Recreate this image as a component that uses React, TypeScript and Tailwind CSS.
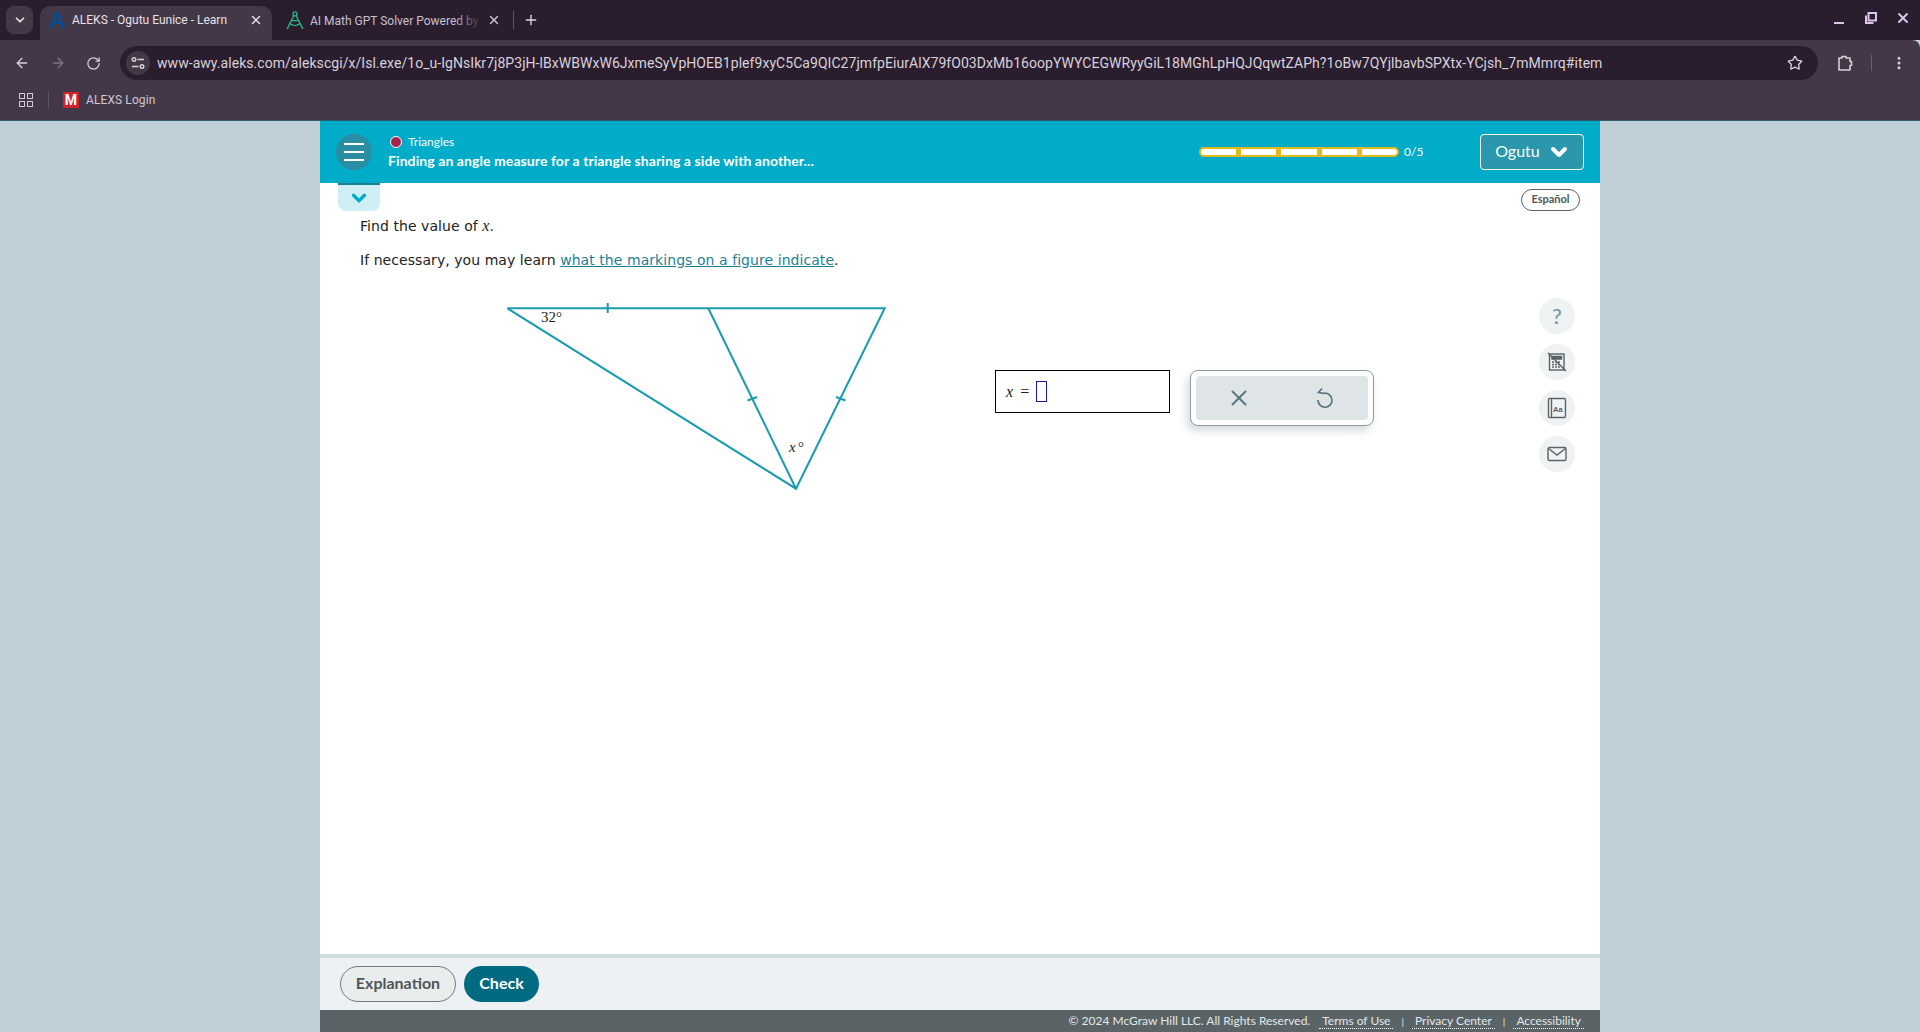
import { ArrowLeft, ArrowRight, RotateCw, Star, EllipsisVertical, X, Plus, ChevronDown } from "lucide-react";

const url =
  "www-awy.aleks.com/alekscgi/x/Isl.exe/1o_u-IgNsIkr7j8P3jH-lBxWBWxW6JxmeSyVpHOEB1plef9xyC5Ca9QIC27jmfpEiurAlX79fO03DxMb16oopYWYCEGWRyyGiL18MGhLpHQJQqwtZAPh?1oBw7QYjlbavbSPXtx-YCjsh_7mMmrq#item";

function AleksLogo() {
  return (
    <svg width="18" height="18" viewBox="0 0 18 18" className="shrink-0">
      <path d="M1 17 7 1h4l6 16h-4l-1.2-4H6l-1.2 4Zm6-7h3.8L9 4.5Z" fill="#0f4a8a" />
    </svg>
  );
}

function CompassLogo() {
  return (
    <svg width="20" height="20" viewBox="0 0 18 18" fill="none" stroke="#2fb58c" strokeWidth="1.2" className="shrink-0">
      <circle cx="9" cy="3.5" r="1.8" />
      <path d="M8 5 2 17M10 5l6 12M4 12c3 2.5 7 2.5 10 0M5.5 9.5h7" />
    </svg>
  );
}

function TabStrip() {
  return (
    <div className="h-10 bg-[#2a1e2e] flex items-end relative shrink-0">
      <div className="absolute left-[6px] top-[6px] w-[27px] h-[28px] rounded-lg bg-[#433847] flex items-center justify-center">
        <ChevronDown size={14} strokeWidth={3} className="text-[#e6dfe8]" />
      </div>
      <div className="ml-10 w-[232px] h-[34px] bg-[#433847] rounded-t-[10px] flex items-center pl-2 pr-[9px] pb-[6px] text-[#e8e0ea]">
        <AleksLogo />
        <span className="ml-[6px] text-xs whitespace-nowrap">ALEKS - Ogutu Eunice - Learn</span>
        <X size={14} strokeWidth={2.5} className="ml-auto" />
      </div>
      <div className="ml-[13px] w-[217px] h-[34px] flex items-center pb-[6px] text-[#c9c0cc]">
        <CompassLogo />
        <div className="ml-[5px] w-[172px] relative overflow-hidden">
          <span className="text-xs whitespace-nowrap">AI Math GPT Solver Powered by</span>
          <div className="absolute right-0 top-0 bottom-0 w-[28px] bg-gradient-to-r from-transparent to-[#2a1e2e]" />
        </div>
        <X size={14} strokeWidth={2.5} className="ml-auto mr-[1px]" />
      </div>
      <div className="w-px h-[18px] bg-[#5e5264] ml-[11px] mb-[11px]" />
      <Plus size={16} strokeWidth={2} className="ml-[9px] mb-3 text-[#e0d8e3]" />
      <div className="ml-auto flex items-center h-full pb-1 pr-[9px] text-[#dcc4ec]">
        <div className="w-[10px] h-[2px] bg-current mt-[9px]" />
        <svg width="12" height="12" viewBox="0 0 12 12" fill="none" stroke="currentColor" strokeWidth="2" className="ml-[21px]">
          <path d="M3.5 1h7.5v7.5H3.5ZM1 3.5V11h7.5" />
        </svg>
        <X size={16} strokeWidth={2.8} className="ml-[18px]" />
      </div>
    </div>
  );
}

function TuneIcon() {
  return (
    <svg width="14" height="14" viewBox="0 0 14 14" fill="none" stroke="currentColor" strokeWidth="1.4">
      <circle cx="3" cy="3.5" r="1.8" />
      <path d="M6.5 3.5H13M1 10.5h6.5" />
      <circle cx="11" cy="10.5" r="1.8" />
    </svg>
  );
}

function ExtensionIcon() {
  return (
    <svg width="18" height="18" viewBox="0 0 18 18" fill="none" stroke="currentColor" strokeWidth="1.6" className="ml-[18px]">
      <path d="M3 4h3V2.5h4V4h4v3.5h1.5v4H14V16H3Z" strokeLinejoin="round" />
    </svg>
  );
}

function Toolbar() {
  return (
    <div className="h-[46px] bg-[#433847] rounded-tr-lg flex items-center shrink-0 text-[#d8d0db]">
      <ArrowLeft size={16} strokeWidth={2} className="ml-[14px]" />
      <ArrowRight size={16} strokeWidth={2} className="ml-[20px] text-[#7f7484]" />
      <RotateCw size={15} strokeWidth={2} className="ml-[20px]" />
      <div className="ml-[19px] w-[1698px] h-[34px] rounded-full bg-[#2a1e2e] flex items-center pl-[6px] pr-[15px]">
        <div className="w-6 h-6 rounded-full bg-[#433847] flex items-center justify-center">
          <TuneIcon />
        </div>
        <span className="ml-[7px] text-[14px] tracking-[0.05px] text-[#d8d0db] whitespace-nowrap">{url}</span>
        <Star size={16} strokeWidth={2} className="ml-auto" />
      </div>
      <ExtensionIcon />
      <div className="w-px h-4 bg-[#6a5f6f] ml-[17px]" />
      <EllipsisVertical size={16} strokeWidth={2.5} className="ml-[19px]" />
    </div>
  );
}

function BookmarksBar() {
  return (
    <div className="h-[34px] pb-[6px] bg-[#433847] flex items-center shrink-0 text-[#d0c8d4]">
      <div className="ml-[19px] grid grid-cols-2 gap-[2px]">
        <div className="w-[6px] h-[6px] border border-current" />
        <div className="w-[6px] h-[6px] border border-current" />
        <div className="w-[6px] h-[6px] border border-current" />
        <div className="w-[6px] h-[6px] border border-current" />
      </div>
      <div className="w-px h-4 bg-[#5e5264] ml-[15px]" />
      <div className="ml-[14px] w-4 h-4 bg-[#d3202c] text-white text-[14px] leading-4 font-bold text-center">M</div>
      <span className="ml-[7px] text-xs tracking-[0.1px]">ALEXS Login</span>
    </div>
  );
}

function Figure() {
  return (
    <svg width="390" height="196" viewBox="500 300 390 196" fill="none" stroke="#1a9bb0" strokeWidth="2" className="shrink-0">
      <path d="M507.3 308.3H884.7L796 488.7 507.3 308.3" />
      <path d="M708.3 308.3 796 488.7" />
      <path d="M607.7 303v10M747.5 400.5l9.5-3.5M836 397l9.5 3.5" />
      <text x="541" y="322" stroke="none" fill="#222" fontFamily="'Liberation Serif', serif" fontSize="15">32°</text>
      <text x="789" y="452" stroke="none" fill="#222" fontFamily="'Liberation Serif', serif" fontSize="15" fontStyle="italic">x</text>
      <text x="798" y="452" stroke="none" fill="#222" fontFamily="'Liberation Serif', serif" fontSize="15">°</text>
    </svg>
  );
}

function SideButton({ children }: { children: React.ReactNode }) {
  return (
    <div className="w-9 h-9 rounded-full bg-[#eff2f3] flex items-center justify-center text-[#5a6366]">{children}</div>
  );
}

function SideTools() {
  return (
    <div className="w-20 shrink-0 flex flex-col items-end pt-[6px]">
      <div className="mr-5 w-[59px] h-[22px] pb-px rounded-full border border-[#5a6366] text-[11px] font-bold text-[#4f5759] flex items-center justify-center font-['Lato',sans-serif]">
        Español
      </div>
      <div className="mr-[25px] mt-[87px] flex flex-col gap-[10px]">
        <SideButton>
          <span className="text-[22px] leading-none text-[#6f8f99] font-['Lato',sans-serif]">?</span>
        </SideButton>
        <SideButton>
          <svg width="20" height="20" viewBox="0 0 20 20" fill="none" stroke="currentColor" strokeWidth="1.4">
            <rect x="2.5" y="2" width="14.5" height="16" />
            <path d="M5 4.5h9.5v2.5H5Z" fill="currentColor" />
            <path d="M5 10h9M5 12.5h9M5 15h9" strokeWidth="1.5" strokeDasharray="2 1" />
            <path d="M1 1l18 18" />
          </svg>
        </SideButton>
        <SideButton>
          <svg width="20" height="22" viewBox="0 0 20 22" fill="none" stroke="currentColor" strokeWidth="1.4">
            <rect x="1.5" y="1.5" width="17" height="19" rx="1" />
            <path d="M4.5 1.5v19" />
            <text x="6" y="14.5" stroke="none" fill="currentColor" fontSize="7.5" fontWeight="700" fontFamily="'Liberation Sans', sans-serif">Aa</text>
          </svg>
        </SideButton>
        <SideButton>
          <svg width="20" height="16" viewBox="0 0 20 16" fill="none" stroke="currentColor" strokeWidth="1.4">
            <rect x="1" y="1.5" width="18" height="13" rx="1.5" />
            <path d="M1.5 2.5 10 9l8.5-6.5" />
          </svg>
        </SideButton>
      </div>
    </div>
  );
}

export default function App() {
  return (
    <div className="h-[1032px] flex flex-col overflow-hidden font-['Roboto',sans-serif] bg-[#c0ced5]">
      <TabStrip />
      <Toolbar />
      <BookmarksBar />
      <div className="h-px bg-[#2f5a6b] shrink-0" />
      <div className="flex-1 w-[1280px] mx-auto flex flex-col bg-white min-h-0">
        <header className="h-[62px] bg-[#00acc8] flex items-center relative shrink-0 text-white font-['Lato',sans-serif]">
          <div className="ml-4 w-9 h-9 rounded-full bg-[#2a8ea3] flex flex-col items-center justify-center gap-[6px]">
            <div className="w-5 h-[2px] bg-white" />
            <div className="w-5 h-[2px] bg-white" />
            <div className="w-5 h-[2px] bg-white" />
          </div>
          <div className="ml-[16px] flex flex-col gap-[4px]">
            <div className="flex items-center pl-[2px]">
              <span className="w-[12px] h-[12px] rounded-full bg-[#a8234f] border border-white" />
              <span className="ml-[6px] text-[12px] leading-[14px]">Triangles</span>
            </div>
            <div className="text-[14px] leading-[16px] font-bold tracking-[0.08px]">Finding an angle measure for a triangle sharing a side with another...</div>
          </div>
          <div className="ml-auto w-[200px] h-[10px] rounded-full bg-white border-2 border-[#e6b81e] flex justify-between px-[35px]">
            <div className="w-[5px] bg-[#e6b81e]" />
            <div className="w-[5px] bg-[#e6b81e]" />
            <div className="w-[5px] bg-[#e6b81e]" />
            <div className="w-[5px] bg-[#e6b81e]" />
          </div>
          <span className="ml-[5px] text-[12px] w-[76px]">0/5</span>
          <div className="mr-4 w-[104px] h-9 rounded border border-white bg-[#2a97ad] flex items-center justify-center gap-[7px] pl-[2px] pb-[2px] text-[16px]">
            Ogutu
            <ChevronDown size={24} strokeWidth={4} className="mt-[2px]" />
          </div>
          <div className="absolute left-[18px] top-[62px] w-[42px] h-[28px] rounded-b-lg bg-[#cfeef5] border-t-2 border-[#1a7f95] flex items-center justify-center">
            <ChevronDown size={22} strokeWidth={3.5} className="text-[#00acc8]" />
          </div>
        </header>

        <div className="flex-1 flex min-h-0">
          <div className="flex-1 pl-10 pt-[33px] text-[14px] leading-5 tracking-[0.06px] text-[#222] font-['DejaVu_Sans',sans-serif]">
            <p>
              Find the value of <i className="font-['Liberation_Serif',serif] text-[16px]">x</i>.
            </p>
            <p className="mt-[14px]">
              If necessary, you may learn <a className="text-[#1f7f96] underline">what the markings on a figure indicate</a>.
            </p>
            <div className="mt-[30px] ml-[140px] flex items-start">
              <Figure />
              <div className="ml-[105px] mt-[70px] w-[175px] h-[43px] border border-black flex items-center pl-[10px] text-[#222] font-['Liberation_Serif',serif] text-[16px] shrink-0">
                <i>x</i>
                <span className="ml-[7px]">=</span>
                <div className="ml-[7px] w-[11px] h-[21px] border border-[#1a1a9c]" />
              </div>
              <div className="ml-[20px] mt-[70px] w-[184px] h-[56px] rounded-lg border border-[#8a9ca1] bg-white p-[5px] shadow-[-3px_5px_8px_rgba(90,110,120,0.25)] shrink-0">
                <div className="h-full rounded-sm bg-[#dfe5e7] flex items-center text-[#5a7680]">
                  <div className="w-1/2 flex justify-center">
                    <X size={26} strokeWidth={1.8} />
                  </div>
                  <div className="w-1/2 flex justify-center">
                    <svg width="20" height="22" viewBox="0 0 20 22" fill="none" stroke="currentColor" strokeWidth="1.7">
                      <path d="M7 1.5 3.5 5.5 9 6.3A7 7 0 1 1 3 13" />
                    </svg>
                  </div>
                </div>
              </div>
            </div>
          </div>
          <SideTools />
        </div>

        <div className="h-[56px] border-t-4 border-[#d3dcdd] bg-[#edf1f3] flex items-center pl-5 gap-2 shrink-0 text-[16px] font-bold font-['Lato',sans-serif]">
          <div className="w-[116px] h-9 pb-[2px] rounded-full border border-[#6f7a7d] bg-[#e9edee] text-[#4f5759] flex items-center justify-center">Explanation</div>
          <div className="w-[75px] h-9 pb-[2px] rounded-full bg-[#006a80] text-white flex items-center justify-center">Check</div>
        </div>
        <footer className="h-[22px] bg-[#5a6366] flex items-center justify-end pr-4 text-[12px] text-[#e3e8e9] shrink-0 font-['Lato',sans-serif]">
          <span>© 2024 McGraw Hill LLC. All Rights Reserved.</span>
          <a className="ml-[9px] border-b border-dotted border-white leading-[15px] px-[3px]">Terms of Use</a>
          <span className="mx-2 text-[10px]">|</span>
          <a className="border-b border-dotted border-white leading-[15px] px-[3px]">Privacy Center</a>
          <span className="mx-2 text-[10px]">|</span>
          <a className="border-b border-dotted border-white leading-[15px] px-[3px]">Accessibility</a>
        </footer>
      </div>
    </div>
  );
}
